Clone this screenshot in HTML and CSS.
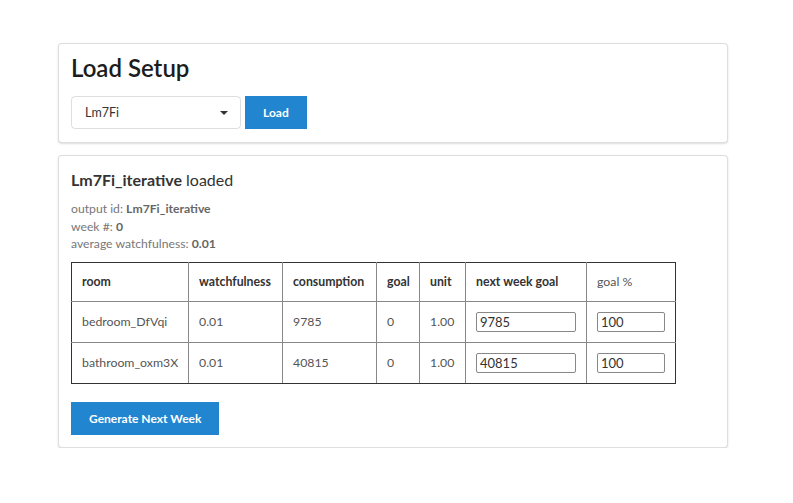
FILE: index.html
```html
<!DOCTYPE html>
<html>
<head>
<meta charset="utf-8">
<link rel="stylesheet" href="styles.css">
</head>
<body>
<div class="page">
  <section class="card card-setup">
    <h2 class="title">Load Setup</h2>
    <div class="controls">
      <div class="select">
        <span class="select-text">Lm7Fi</span>
        <span class="caret"></span>
      </div>
      <button class="btn">Load</button>
    </div>
  </section>
  <section class="card card-result">
    <h3 class="subtitle"><b>Lm7Fi_iterative</b> loaded</h3>
    <div class="meta">
      <div>output id: <b>Lm7Fi_iterative</b></div>
      <div>week #: <b>0</b></div>
      <div>average watchfulness: <b>0.01</b></div>
    </div>
    <table class="grid">
      <colgroup>
        <col class="c1"><col class="c2"><col class="c3"><col class="c4"><col class="c5"><col class="c6"><col class="c7">
      </colgroup>
      <thead>
        <tr>
          <th>room</th>
          <th>watchfulness</th>
          <th>consumption</th>
          <th>goal</th>
          <th>unit</th>
          <th>next week goal</th>
          <th class="light">goal %</th>
        </tr>
      </thead>
      <tbody>
        <tr>
          <td>bedroom_DfVqi</td>
          <td>0.01</td>
          <td>9785</td>
          <td>0</td>
          <td>1.00</td>
          <td><input class="inp" type="text" value="9785"></td>
          <td><input class="inp" type="text" value="100"></td>
        </tr>
        <tr>
          <td>bathroom_oxm3X</td>
          <td>0.01</td>
          <td>40815</td>
          <td>0</td>
          <td>1.00</td>
          <td><input class="inp" type="text" value="40815"></td>
          <td><input class="inp" type="text" value="100"></td>
        </tr>
      </tbody>
    </table>
    <button class="btn btn-wide">Generate Next Week</button>
  </section>
</div>
</body>
</html>
```
FILE: styles.css
```css
html, body {
  margin: 0;
  padding: 0;
  background: #ffffff;
}
body {
  font-family: Lato, "Open Sans", sans-serif;
  color: #333;
}
.page {
  width: 670px;
  margin-left: 58px;
  padding-top: 43px;
  display: flex;
  flex-direction: column;
  gap: 12px;
}
.card {
  border: 1px solid rgba(34, 36, 38, 0.15);
  border-radius: 4px;
  box-shadow: 0 1px 2px 0 rgba(34, 36, 38, 0.15);
  background: #fff;
}
.card-setup {
  padding: 8px 12px 13px;
}
.card-result {
  padding: 14px 12px 12px;
}
.title {
  margin: 0 0 13px;
  font-size: 24px;
  line-height: 31px;
  font-weight: 600;
  color: #1b1c1d;
}
.controls {
  display: flex;
  gap: 4px;
}
.select {
  width: 170px;
  height: 33px;
  box-sizing: border-box;
  border: 1px solid rgba(34, 36, 38, 0.15);
  border-radius: 4px;
  display: flex;
  align-items: center;
  justify-content: space-between;
  padding: 0 12px 0 13px;
  font-size: 12.5px;
  color: #333;
}
.caret {
  width: 0;
  height: 0;
  border-left: 4px solid transparent;
  border-right: 4px solid transparent;
  border-top: 4px solid #333;
}
.btn {
  height: 33px;
  border: none;
  border-radius: 0;
  background: #2185d0;
  color: #fff;
  font-family: Lato, "Open Sans", sans-serif;
  font-weight: 700;
  font-size: 12px;
  padding: 0 18px;
  cursor: pointer;
}
.subtitle {
  margin: 0;
  font-size: 16px;
  line-height: 20px;
  font-weight: 400;
  color: #333;
}
.subtitle b {
  font-weight: 700;
}
.meta {
  margin-top: 10px;
  font-size: 12.2px;
  line-height: 17.5px;
  color: #777;
}
.meta b {
  font-weight: 700;
  color: #666;
}
.grid {
  margin-top: 9px;
  border-collapse: collapse;
  table-layout: fixed;
  width: 604px;
  font-size: 12.3px;
}
.c1 { width: 117px; }
.c2 { width: 94px; }
.c3 { width: 94px; }
.c4 { width: 43px; }
.c5 { width: 46px; }
.c6 { width: 121px; }
.c7 { width: 89px; }
.grid th, .grid td {
  border: 1px solid #888;
  padding: 0 10px;
  text-align: left;
  white-space: nowrap;
}
.grid tr > :first-child {
  border-left-color: #333;
}
.grid tr > :last-child {
  border-right-color: #333;
}
.grid thead th {
  border-top-color: #333;
}
.grid tbody tr:last-child td {
  border-bottom-color: #333;
}
.grid th {
  height: 38px;
  font-weight: 700;
  font-size: 12.3px;
  color: #333;
}
.grid th.light {
  font-weight: 400;
  color: #555;
}
.grid td {
  height: 40px;
  font-size: 12.3px;
  color: #555;
}
.inp {
  width: 100%;
  box-sizing: border-box;
  height: 20px;
  border: 1px solid #888;
  border-radius: 2px;
  padding: 0 3px;
  font-family: Lato, "Open Sans", sans-serif;
  font-size: 13px;
  color: #333;
  display: block;
}
.btn-wide {
  margin-top: 18px;
  align-self: flex-start;
}
```
